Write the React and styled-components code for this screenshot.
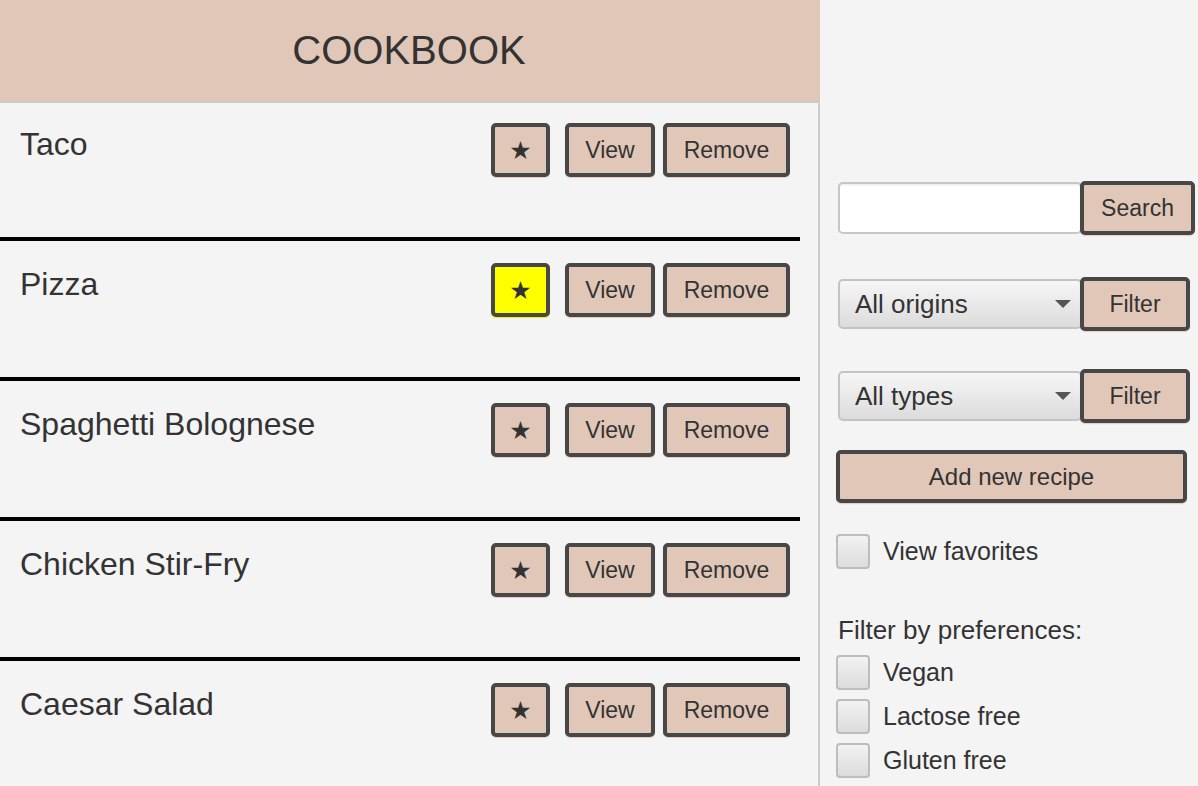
import React from "react";
import styled, { createGlobalStyle } from "styled-components";

const Global = createGlobalStyle`
  html, body { margin: 0; padding: 0; background: #f4f4f4; }
  body { font-family: "Liberation Sans", Arial, sans-serif; color: #333; }
  * { box-sizing: border-box; }
`;

const Page = styled.div`
  display: flex;
  width: 1198px;
  height: 786px;
  overflow: hidden;
  background: #f4f4f4;
`;

const Left = styled.div`
  width: 820px;
  flex: none;
  display: flex;
  flex-direction: column;
`;

const Header = styled.header`
  flex: none;
  height: 103px;
  background: #e1c7b8;
  border-bottom: 2px solid #cbcbcb;
  display: flex;
  align-items: center;
  justify-content: center;
  padding-right: 2px;
  font-size: 40px;
  color: #333;
`;

const List = styled.div`
  flex: 1;
  border-right: 2px solid #cbcbcb;
  padding-right: 18px;
`;

const Row = styled.div`
  flex: none;
  height: ${(p) => (p.$first ? 134 : 140)}px;
  width: 800px;
  display: flex;
  justify-content: space-between;
  align-items: flex-start;
  padding: ${(p) => (p.$first ? 20 : 22)}px 10px 0 20px;
  border-top: ${(p) => (p.$first ? "none" : "4px solid #000")};
`;

const Title = styled.div`
  font-size: 32px;
  line-height: 37px;
  margin-top: 3px;
  color: #333;
`;

const Actions = styled.div`
  display: flex;
  gap: 8px;
`;

const Btn = styled.button`
  font-family: "Liberation Sans", Arial, sans-serif;
  font-size: ${(p) => p.$fs || 23}px;
  color: #333;
  background: ${(p) => p.$bg || "#e1c7b8"};
  border: 4px solid #474747;
  border-radius: 5px;
  height: ${(p) => p.$h || 54}px;
  width: ${(p) => p.$w}px;
  padding: 1px 0 0;
  margin: 0;
  box-shadow: 0 1px 1px ${(p) => p.$glow || "#e6cbbb"};
  display: flex;
  align-items: center;
  justify-content: center;
  cursor: pointer;
`;

const StarBtn = styled(Btn)`
  margin-right: 7px;
  font-family: "DejaVu Sans", sans-serif;
  font-size: 25px;
  padding-top: 1px;
`;

const Right = styled.div`
  flex: 1;
  display: flex;
  flex-direction: column;
  padding-left: 18px;
`;

const InlineRow = styled.div`
  display: flex;
  align-items: center;
  margin-top: ${(p) => p.$mt}px;
  margin-left: ${(p) => p.$ml || 0}px;
`;

const SearchInput = styled.input`
  width: 244px;
  height: 52px;
  background: #fff;
  border: 2px solid #c6c6c6;
  border-radius: 5px;
  box-shadow: inset 0 3px 3px -2px #e8e8e8;
  outline: none;
  font-size: 22px;
  padding: 0 10px;
`;

const Select = styled.div`
  position: relative;
  width: 244px;
  height: 50px;
  border: 2px solid #c3c3c3;
  border-radius: 5px;
  background: linear-gradient(#f6f6f6, #dcdcdc);
  font-size: 26px;
  color: #333;
  display: flex;
  align-items: center;
  padding-left: 15px;
`;

const Arrow = styled.span`
  position: absolute;
  right: 9px;
  top: 50%;
  margin-top: -4px;
  width: 0;
  height: 0;
  border-left: 8px solid transparent;
  border-right: 8px solid transparent;
  border-top: 8px solid #555;
`;

const Overlap = styled.div`
  margin-left: -2px;
  position: relative;
`;

const Check = styled.label`
  display: flex;
  align-items: center;
  gap: 13px;
  margin-left: -2px;
  margin-top: ${(p) => p.$mt}px;
  font-size: 25px;
  color: #333;
`;

const Box = styled.span`
  width: 34px;
  height: 35px;
  border: 2px solid #bdbdbd;
  border-radius: 4px;
  background: linear-gradient(#f2f2f2, #dcdcdc);
  flex: none;
`;

const Label = styled.div`
  font-size: 26px;
  margin-top: ${(p) => p.$mt}px;
  color: #333;
`;

const recipes = [
  { name: "Taco", fav: false },
  { name: "Pizza", fav: true },
  { name: "Spaghetti Bolognese", fav: false },
  { name: "Chicken Stir-Fry", fav: false },
  { name: "Caesar Salad", fav: false },
];

export default function App() {
  return (
    <>
      <Global />
      <Page>
        <Left>
          <Header>COOKBOOK</Header>
          <List>
            {recipes.map((r, i) => (
              <Row key={r.name} $first={i === 0}>
                <Title>{r.name}</Title>
                <Actions>
                  <StarBtn
                    $w={59}
                    $bg={r.fav ? "#ffff00" : "#e1c7b8"}
                    $glow={r.fav ? "#f2f200" : "#e6cbbb"}
                  >
                    ★
                  </StarBtn>
                  <Btn $w={90}>View</Btn>
                  <Btn $w={127}>Remove</Btn>
                </Actions>
              </Row>
            ))}
          </List>
        </Left>
        <Right>
          <InlineRow $mt={181}>
            <SearchInput />
            <Overlap>
              <Btn $w={115} $h={54} $fs={23}>Search</Btn>
            </Overlap>
          </InlineRow>
          <InlineRow $mt={42}>
            <Select>
              All origins
              <Arrow />
            </Select>
            <Overlap>
              <Btn $w={110} $h={54} $fs={23}>Filter</Btn>
            </Overlap>
          </InlineRow>
          <InlineRow $mt={38}>
            <Select>
              All types
              <Arrow />
            </Select>
            <Overlap>
              <Btn $w={110} $h={54} $fs={23}>Filter</Btn>
            </Overlap>
          </InlineRow>
          <InlineRow $mt={27} $ml={-2}>
            <Btn $w={351} $h={53} $fs={24}>Add new recipe</Btn>
          </InlineRow>
          <Check $mt={31}>
            <Box />
            View favorites
          </Check>
          <Label $mt={46}>Filter by preferences:</Label>
          <Check $mt={9}>
            <Box />
            Vegan
          </Check>
          <Check $mt={9}>
            <Box />
            Lactose free
          </Check>
          <Check $mt={9}>
            <Box />
            Gluten free
          </Check>
        </Right>
      </Page>
    </>
  );
}
